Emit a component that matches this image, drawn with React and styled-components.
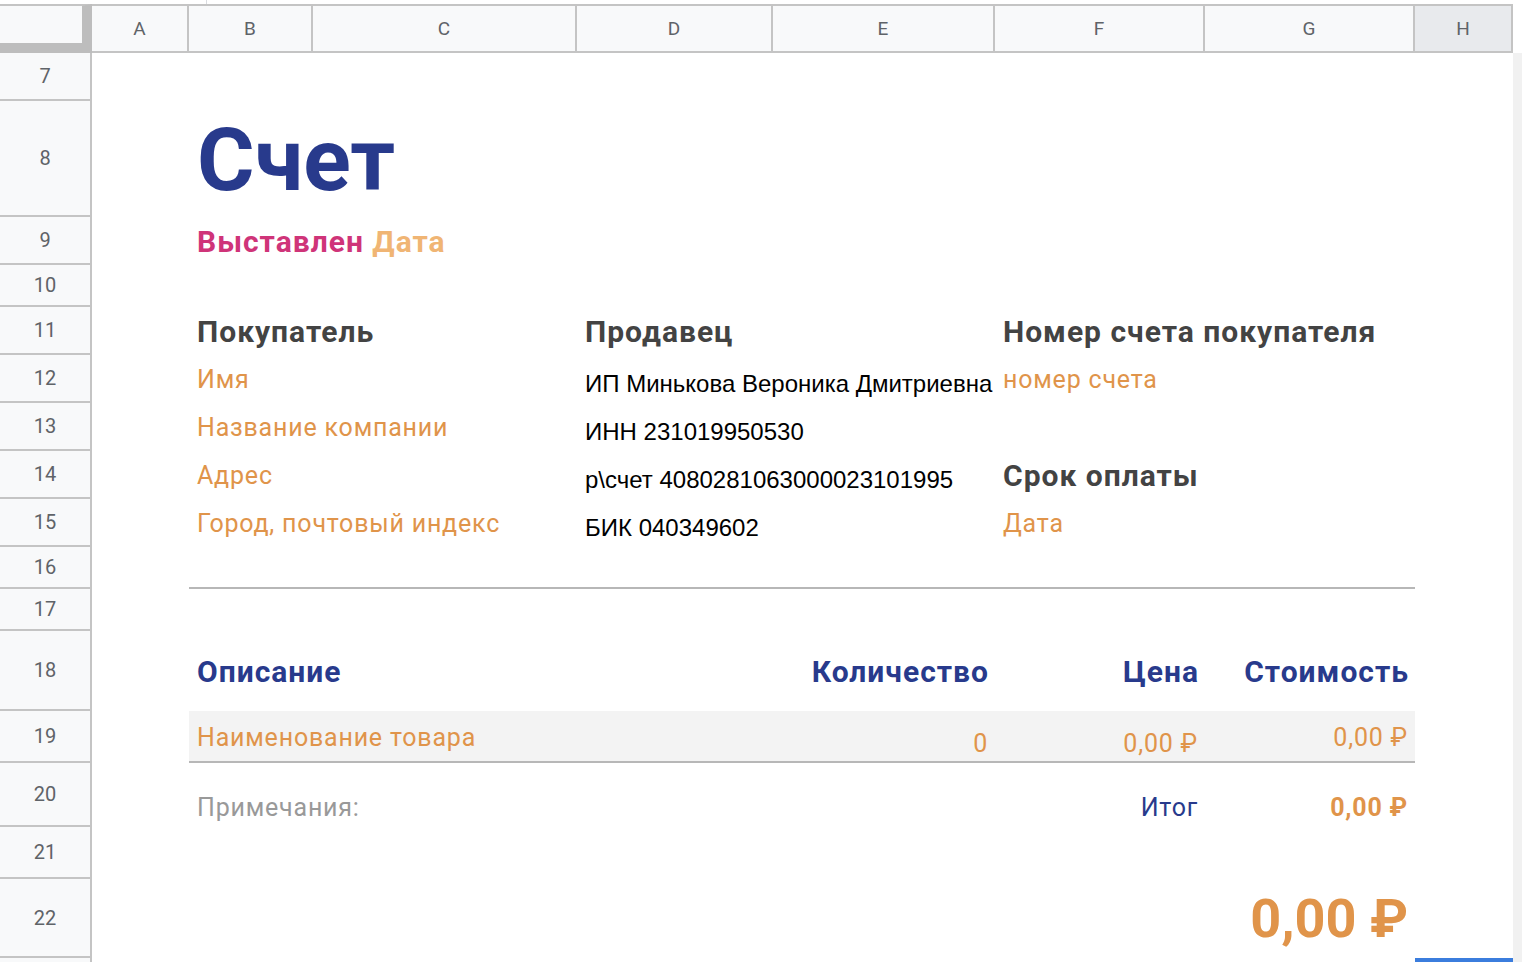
import React from "react";
import styled, { createGlobalStyle } from "styled-components";

const COLS = "92px 97px 124px 264px 196px 222px 210px 210px 98px 9px";
const COL = { A: 2, B: 3, C: 4, D: 5, E: 6, F: 7, G: 8, H: 9 };
const LETTERS = ["A", "B", "C", "D", "E", "F", "G", "H"];

const NAVY = "#283a8c";
const ORANGE = "#e0944a";

const GlobalStyle = createGlobalStyle`
  html, body {
    margin: 0;
    padding: 0;
    background: #fff;
  }
  body {
    font-family: Roboto, "Noto Sans", sans-serif;
    overflow: hidden;
  }
  * {
    box-sizing: border-box;
  }
`;

const Sheet = styled.div`
  width: 1522px;
  height: 962px;
  overflow: hidden;
  background: #fff;
`;

const TopStrip = styled.div`
  height: 4px;
  display: flex;
`;

const StripDivider = styled.div`
  margin-left: 206px;
  width: 1px;
  background: #dadce0;
`;

const HeaderRow = styled.div`
  display: grid;
  grid-template-columns: ${COLS};
  height: 49px;
`;

const Corner = styled.div`
  background: #f8f9fa;
  border-top: 2px solid #c4c4c4;
  border-right: 10px solid #bdbdbd;
  border-bottom: 10px solid #bdbdbd;
`;

const ColHead = styled.div`
  background: ${({ $selected }) => ($selected ? "#e8eaed" : "#f8f9fa")};
  border-top: 2px solid #c4c4c4;
  border-bottom: 2px solid #c4c4c4;
  border-right: 2px solid #c4c4c4;
  display: flex;
  align-items: center;
  justify-content: center;
  font-size: 19px;
  color: #5f6368;
`;

const HeadGutter = styled.div`
  background: #fff;
`;

const Row = styled.div`
  display: grid;
  grid-template-columns: ${COLS};
  grid-template-rows: ${({ $h }) => $h}px;
`;

const RowHead = styled.div`
  grid-column: 1;
  grid-row: 1;
  background: #f8f9fa;
  border-right: 2px solid #c4c4c4;
  border-bottom: 2px solid #c4c4c4;
  display: flex;
  align-items: center;
  justify-content: center;
  font-size: 20px;
  color: #5f6368;
`;

const Gutter = styled.div`
  grid-column: 10;
  grid-row: 1;
  background: #f1f1f1;
`;

const Band = styled.div`
  grid-column: 3 / 9;
  grid-row: 1;
  background: ${({ $shade }) => ($shade ? "#f3f3f3" : "transparent")};
  border-bottom: 2px solid #b7b7b7;
`;

const Cell = styled.div`
  grid-column: ${({ $col }) => $col};
  grid-row: 1;
  display: flex;
  align-items: ${({ $bottom }) => ($bottom ? "flex-end" : "center")};
  justify-content: ${({ $right }) => ($right ? "flex-end" : "flex-start")};
  padding: 0 7px ${({ $bottom }) => ($bottom ? 5 : 0)}px 8px;
  white-space: nowrap;
  min-width: 0;
`;

const Selection = styled.div`
  grid-column: 9;
  grid-row: 1;
  height: 4px;
  background: #3b7ddd;
`;

const Title = styled.span`
  font-size: 88px;
  font-weight: 700;
  color: ${NAVY};
`;

const Issued = styled.span`
  font-size: 30px;
  font-weight: 700;
  letter-spacing: 1px;
  color: #cf3479;
`;

const IssuedDate = styled.span`
  color: #f0b574;
`;

const Heading = styled.span`
  font-size: 30px;
  font-weight: 700;
  letter-spacing: 1px;
  color: #434343;
`;

const Field = styled.span`
  font-size: 25px;
  letter-spacing: 0.8px;
  color: ${ORANGE};
`;

const Seller = styled.span`
  font-family: "Liberation Sans", Arial, sans-serif;
  font-size: 24px;
  color: #000;
`;

const ColTitle = styled.span`
  font-size: 30px;
  font-weight: 700;
  letter-spacing: 1px;
  margin-right: -1px;
  color: ${NAVY};
`;

const Note = styled.span`
  font-size: 25px;
  letter-spacing: 0.8px;
  color: #999;
`;

const SumLabel = styled.span`
  font-size: 25px;
  letter-spacing: 0.8px;
  color: ${NAVY};
`;

const SumValue = styled.span`
  font-size: 25px;
  font-weight: 700;
  letter-spacing: 0.8px;
  color: ${ORANGE};
`;

const BigTotal = styled.span`
  font-size: 54px;
  font-weight: 700;
  color: ${ORANGE};
`;

function SheetRow({ n, h, children }) {
  return (
    <Row $h={h}>
      <RowHead>{n}</RowHead>
      {children}
      <Gutter />
    </Row>
  );
}

export default function App() {
  return (
    <Sheet>
      <GlobalStyle />
      <TopStrip>
        <StripDivider />
      </TopStrip>
      <HeaderRow>
        <Corner />
        {LETTERS.map((l) => (
          <ColHead key={l} $selected={l === "H"}>{l}</ColHead>
        ))}
        <HeadGutter />
      </HeaderRow>

      <SheetRow n={7} h={48} />
      <SheetRow n={8} h={116}>
        <Cell $col={COL.B}><Title>Счет</Title></Cell>
      </SheetRow>
      <SheetRow n={9} h={48}>
        <Cell $col={COL.B}>
          <Issued>Выставлен <IssuedDate>Дата</IssuedDate></Issued>
        </Cell>
      </SheetRow>
      <SheetRow n={10} h={42} />
      <SheetRow n={11} h={48}>
        <Cell $col={COL.B}><Heading>Покупатель</Heading></Cell>
        <Cell $col={COL.D}><Heading>Продавец</Heading></Cell>
        <Cell $col={COL.F}><Heading>Номер счета покупателя</Heading></Cell>
      </SheetRow>
      <SheetRow n={12} h={48}>
        <Cell $col={COL.B}><Field>Имя</Field></Cell>
        <Cell $col={COL.D} $bottom><Seller>ИП Минькова Вероника Дмитриевна</Seller></Cell>
        <Cell $col={COL.F}><Field>номер счета</Field></Cell>
      </SheetRow>
      <SheetRow n={13} h={48}>
        <Cell $col={COL.B}><Field>Название компании</Field></Cell>
        <Cell $col={COL.D} $bottom><Seller>ИНН 231019950530</Seller></Cell>
      </SheetRow>
      <SheetRow n={14} h={48}>
        <Cell $col={COL.B}><Field>Адрес</Field></Cell>
        <Cell $col={COL.D} $bottom><Seller>р\счет 4080281063000023101995</Seller></Cell>
        <Cell $col={COL.F}><Heading>Срок оплаты</Heading></Cell>
      </SheetRow>
      <SheetRow n={15} h={48}>
        <Cell $col={COL.B}><Field>Город, почтовый индекс</Field></Cell>
        <Cell $col={COL.D} $bottom><Seller>БИК 040349602</Seller></Cell>
        <Cell $col={COL.F}><Field>Дата</Field></Cell>
      </SheetRow>
      <SheetRow n={16} h={42}>
        <Band />
      </SheetRow>
      <SheetRow n={17} h={42} />
      <SheetRow n={18} h={80}>
        <Cell $col={COL.B}><ColTitle>Описание</ColTitle></Cell>
        <Cell $col={COL.E} $right><ColTitle>Количество</ColTitle></Cell>
        <Cell $col={COL.F} $right><ColTitle>Цена</ColTitle></Cell>
        <Cell $col={COL.G} $right><ColTitle>Стоимость</ColTitle></Cell>
      </SheetRow>
      <SheetRow n={19} h={52}>
        <Band $shade />
        <Cell $col={COL.B}><Field>Наименование товара</Field></Cell>
        <Cell $col={COL.E} $right $bottom><Field>0</Field></Cell>
        <Cell $col={COL.F} $right $bottom><Field>0,00 ₽</Field></Cell>
        <Cell $col={COL.G} $right><Field>0,00 ₽</Field></Cell>
      </SheetRow>
      <SheetRow n={20} h={64}>
        <Cell $col={COL.B} $bottom><Note>Примечания:</Note></Cell>
        <Cell $col={COL.F} $right $bottom><SumLabel>Итог</SumLabel></Cell>
        <Cell $col={COL.G} $right $bottom><SumValue>0,00 ₽</SumValue></Cell>
      </SheetRow>
      <SheetRow n={21} h={52} />
      <SheetRow n={22} h={79}>
        <Cell $col={COL.G} $right><BigTotal>0,00 ₽</BigTotal></Cell>
      </SheetRow>
      <SheetRow n="" h={10}>
        <Selection />
      </SheetRow>
    </Sheet>
  );
}
